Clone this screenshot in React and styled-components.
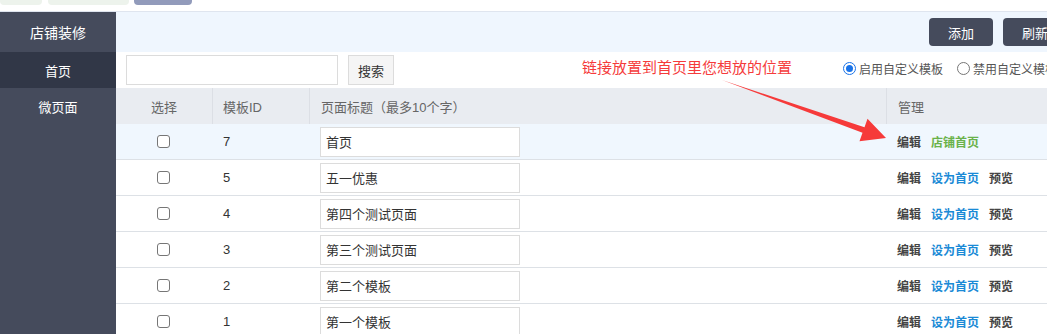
import React from 'react'
import styled, { createGlobalStyle } from 'styled-components'

const Global = createGlobalStyle`
  body {
    margin: 0;
    overflow: hidden;
    background: #fff;
    font-family: "Liberation Sans", "Noto Sans CJK SC", sans-serif;
    color: #333;
  }
`

const Page = styled.div`
  position: relative;
  width: 1077px;
  height: 334px;
  overflow: hidden;
`

const TabStrip = styled.div`
  display: flex;
  gap: 5px;
  height: 12px;
  border-bottom: 1px solid #dfe5ef;
  box-sizing: border-box;
`

const Tab = styled.div`
  width: ${p => p.w}px;
  height: 5px;
  background: ${p => p.dark ? '#929bbb' : '#edf3ec'};
  border-radius: 0 0 4px 4px;
  margin-right: ${p => p.gap || 0}px;
`

const Body = styled.div`
  display: flex;
  height: 322px;
`

const Sidebar = styled.div`
  width: 116px;
  flex-shrink: 0;
  background: #454b5c;
  display: flex;
  flex-direction: column;
`

const SideItem = styled.div`
  height: ${p => p.h}px;
  flex-shrink: 0;
  display: flex;
  align-items: center;
  justify-content: center;
  color: #fff;
  font-size: ${p => p.big ? 14 : 13}px;
  background: ${p => p.active ? '#313747' : 'transparent'};
`

const Main = styled.div`
  flex: 1;
  display: flex;
  flex-direction: column;
  min-width: 0;
`

const TopBar = styled.div`
  height: 40px;
  flex-shrink: 0;
  background: #eff6fe;
  display: flex;
  align-items: center;
  justify-content: flex-end;
  gap: 10px;
  padding-right: 10px;
`

const DarkButton = styled.div`
  width: 64px;
  height: 28px;
  border-radius: 4px;
  background: #454b5c;
  color: #fff;
  font-size: 13px;
  display: flex;
  align-items: center;
  justify-content: center;
`

const SearchRow = styled.div`
  height: 36px;
  flex-shrink: 0;
  display: flex;
  align-items: center;
  padding-left: 10px;
`

const SearchInput = styled.div`
  width: 212px;
  height: 30px;
  box-sizing: border-box;
  border: 1px solid #dcdcdc;
  background: #fff;
`

const SearchButton = styled.div`
  margin-left: 10px;
  width: 46px;
  height: 30px;
  box-sizing: border-box;
  border: 1px solid #dcdcdc;
  background: #f5f5f5;
  font-size: 13px;
  color: #333;
  display: flex;
  align-items: center;
  justify-content: center;
`

const Hint = styled.div`
  margin-left: 188px;
  margin-top: -8px;
  color: #f53b3b;
  font-size: 15px;
`

const Radios = styled.div`
  margin-left: auto;
  display: flex;
  gap: 14px;
  margin-top: -3px;
  width: 234px;
`

const RadioLabel = styled.div`
  display: flex;
  align-items: center;
  gap: 3px;
  font-size: 12px;
  color: #555;
  white-space: nowrap;
`

const RadioDot = styled.span`
  width: 13px;
  height: 13px;
  box-sizing: border-box;
  border-radius: 50%;
  border: ${p => p.on ? '1px solid #1a73e8' : '1px solid #767676'};
  background: #fff;
  display: flex;
  align-items: center;
  justify-content: center;
  &::after {
    content: '';
    display: ${p => p.on ? 'block' : 'none'};
    width: 7px;
    height: 7px;
    border-radius: 50%;
    background: #1a73e8;
  }
`

const Table = styled.div`
  display: flex;
  flex-direction: column;
  flex-shrink: 0;
`

const cols = '96px 97px 577px 1fr'

const HeadRow = styled.div`
  display: grid;
  grid-template-columns: ${cols};
  height: 36px;
  background: #e9ecf1;
  font-size: 13px;
  color: #666;
`

const HeadCell = styled.div`
  display: flex;
  align-items: center;
  justify-content: ${p => p.center ? 'center' : 'flex-start'};
  padding-left: ${p => p.center ? 0 : p.pad || 11}px;
  border-left: ${p => p.first ? 'none' : '1px solid #dcdfe5'};
`

const Row = styled.div`
  display: grid;
  grid-template-columns: ${cols};
  height: 36px;
  box-sizing: border-box;
  border-bottom: 1px solid #dde1e6;
  background: ${p => p.hover ? '#f0f7fe' : '#fff'};
  font-size: 13px;
  color: #333;
`

const Cell = styled.div`
  display: flex;
  align-items: center;
  justify-content: ${p => p.center ? 'center' : 'flex-start'};
  padding-left: ${p => p.center ? 0 : p.pad || 0}px;
  gap: 10px;
`

const Check = styled.span`
  width: 13px;
  height: 13px;
  box-sizing: border-box;
  border: 1px solid #767676;
  border-radius: 3px;
  background: #fff;
  margin-left: -2px;
`

const TitleInput = styled.div`
  width: 200px;
  height: 30px;
  box-sizing: border-box;
  border: 1px solid #dcdcdc;
  background: #fff;
  display: flex;
  align-items: center;
  padding-left: 5px;
  font-size: 13px;
  color: #333;
`

const Action = styled.span`
  font-size: 12px;
  font-weight: bold;
  color: ${p => p.tone === 'green' ? '#6ab24a' : p.tone === 'blue' ? '#1a8ad6' : '#444'};
`

const Arrow = styled.svg`
  position: absolute;
  left: 0;
  top: 0;
  pointer-events: none;
`

const rows = [
  { id: 7, title: '首页', home: true },
  { id: 5, title: '五一优惠' },
  { id: 4, title: '第四个测试页面' },
  { id: 3, title: '第三个测试页面' },
  { id: 2, title: '第二个模板' },
  { id: 1, title: '第一个模板' },
]

export default function App() {
  return (
    <Page>
      <Global />
      <TabStrip>
        <Tab w={42} gap={1} />
        <Tab w={81} />
        <Tab w={58} dark />
      </TabStrip>
      <Body>
        <Sidebar>
          <SideItem h={40} big>店铺装修</SideItem>
          <SideItem h={36} active>首页</SideItem>
          <SideItem h={36}>微页面</SideItem>
        </Sidebar>
        <Main>
          <TopBar>
            <DarkButton>添加</DarkButton>
            <DarkButton>刷新</DarkButton>
          </TopBar>
          <SearchRow>
            <SearchInput />
            <SearchButton>搜索</SearchButton>
            <Hint>链接放置到首页里您想放的位置</Hint>
            <Radios>
              <RadioLabel><RadioDot on />启用自定义模板</RadioLabel>
              <RadioLabel><RadioDot />禁用自定义模板</RadioLabel>
            </Radios>
          </SearchRow>
          <Table>
            <HeadRow>
              <HeadCell first center>选择</HeadCell>
              <HeadCell pad={10}>模板ID</HeadCell>
              <HeadCell>页面标题（最多10个字）</HeadCell>
              <HeadCell>管理</HeadCell>
            </HeadRow>
            {rows.map(r => (
              <Row key={r.id} hover={r.home}>
                <Cell center><Check /></Cell>
                <Cell pad={11}>{r.id}</Cell>
                <Cell pad={11}><TitleInput>{r.title}</TitleInput></Cell>
                <Cell pad={11}>
                  <Action>编辑</Action>
                  {r.home ? (
                    <Action tone="green">店铺首页</Action>
                  ) : (
                    <>
                      <Action tone="blue">设为首页</Action>
                      <Action>预览</Action>
                    </>
                  )}
                </Cell>
              </Row>
            ))}
          </Table>
        </Main>
      </Body>
      <Arrow width="1077" height="334">
        <polygon
          points="722,80 864.5,127.2 867.5,118.7 886,138 859.5,141.3 862.5,132.8"
          fill="#f63a3a"
        />
      </Arrow>
    </Page>
  )
}
